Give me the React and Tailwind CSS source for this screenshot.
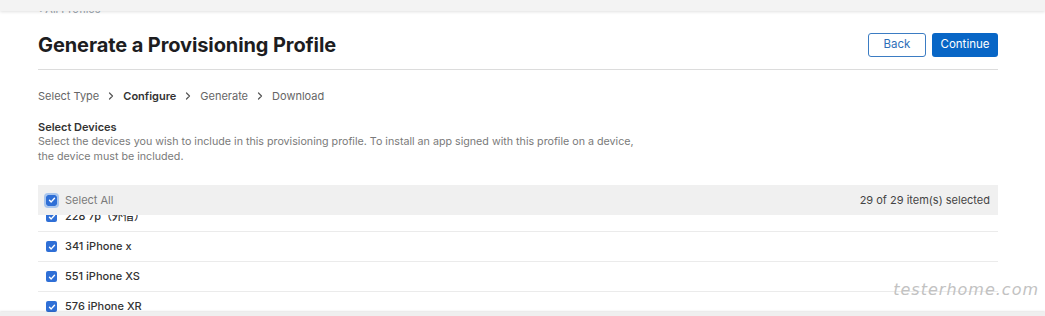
import React from "react";

function Check({ ring = false }) {
  return (
    <span
      className={
        "flex h-[11px] w-[11px] shrink-0 items-center justify-center rounded-[2px] bg-[#2f6fd6] " +
        (ring ? "outline outline-2 outline-[#a9c6ee]" : "")
      }
    >
      <svg width="8" height="8" viewBox="0 0 8 8" fill="none">
        <path d="M1.5 4.2 L3.2 5.9 L6.5 2.2" stroke="#fff" strokeWidth="1.4" strokeLinecap="round" strokeLinejoin="round" />
      </svg>
    </span>
  );
}

function Chevron() {
  return (
    <svg width="6" height="8" viewBox="0 0 6 8" className="mx-[9px]" fill="none">
      <path d="M1.5 1 L4.5 4 L1.5 7" stroke="#555" strokeWidth="1.2" strokeLinecap="round" strokeLinejoin="round" />
    </svg>
  );
}

const rows = ["228 7p（外借）", "341 iPhone x", "551 iPhone XS", "576 iPhone XR"];

export default function App() {
  return (
    <div
      className="relative h-[316px] w-[1045px] overflow-hidden bg-white"
      style={{ fontFamily: "Inter, 'Noto Sans CJK SC', sans-serif" }}
    >
      <div className="absolute left-0 right-0 top-0 z-10 h-[11px] bg-[#f3f3f3] shadow-[0_1px_3px_rgba(0,0,0,0.12)]" />

      <div className="pl-[38px] pr-[47px]">
        <div className="mt-[3px] h-[12px] text-[11px] leading-[12px] text-[#9aa3ad]">‹ All Profiles</div>

        <div className="flex items-center justify-between border-b border-[#dcdcdc] pb-[12px] pt-[18px]">
          <h1 className="text-[20px] font-bold leading-[24px] tracking-[-0.1px] text-[#1d1d1f]">
            Generate a Provisioning Profile
          </h1>
          <div className="flex gap-[6px]">
            <button className="h-[24px] w-[58px] rounded-[3px] border border-[#3b7cc3] bg-white text-[11.5px] text-[#2e6fb8]">
              Back
            </button>
            <button className="h-[24px] w-[66px] rounded-[3px] bg-[#0866c6] text-[11.5px] text-white">
              Continue
            </button>
          </div>
        </div>

        <div className="mt-[19px] flex items-center text-[11px] leading-[14px] text-[#666]">
          <span>Select Type</span>
          <Chevron />
          <span className="font-semibold text-[#333]">Configure</span>
          <Chevron />
          <span>Generate</span>
          <Chevron />
          <span>Download</span>
        </div>

        <div className="mt-[17px] text-[11px] font-semibold leading-[14px] text-[#333]">Select Devices</div>
        <div className="text-[10.7px] leading-[15px] text-[#7a7a7a]">
          Select the devices you wish to include in this provisioning profile. To install an app signed with this profile on a device,
          <br />
          the device must be included.
        </div>

        <div className="mt-[21px] flex h-[30px] items-center justify-between bg-[#f0f0f0] pl-[8px] pr-[8px] text-[11px]">
          <div className="flex items-center gap-[8px]">
            <Check ring />
            <span className="text-[#7a7a7a]">Select All</span>
          </div>
          <span className="text-[#444]">29 of 29 item(s) selected</span>
        </div>

        <div className="h-[100px] overflow-hidden">
          <div className="-mt-[13px]">
            {rows.map((r) => (
              <div key={r} className="flex h-[30px] items-center gap-[8px] border-b border-[#ebebeb] pl-[8px] text-[11px] font-medium text-[#333]">
                <Check />
                <span>{r}</span>
              </div>
            ))}
          </div>
        </div>
      </div>

      <div
        className="absolute right-[6px] top-[278px] text-[16px] font-extralight tracking-[1px] text-[#c2c2c2]"
        style={{ fontFamily: "'DejaVu Sans', sans-serif", fontStyle: "italic" }}
      >
        testerhome.com
      </div>

      <div className="absolute bottom-0 left-0 right-0 z-10 h-[4px] bg-[#efefef] shadow-[0_-1px_2px_rgba(0,0,0,0.1)]" />
    </div>
  );
}
